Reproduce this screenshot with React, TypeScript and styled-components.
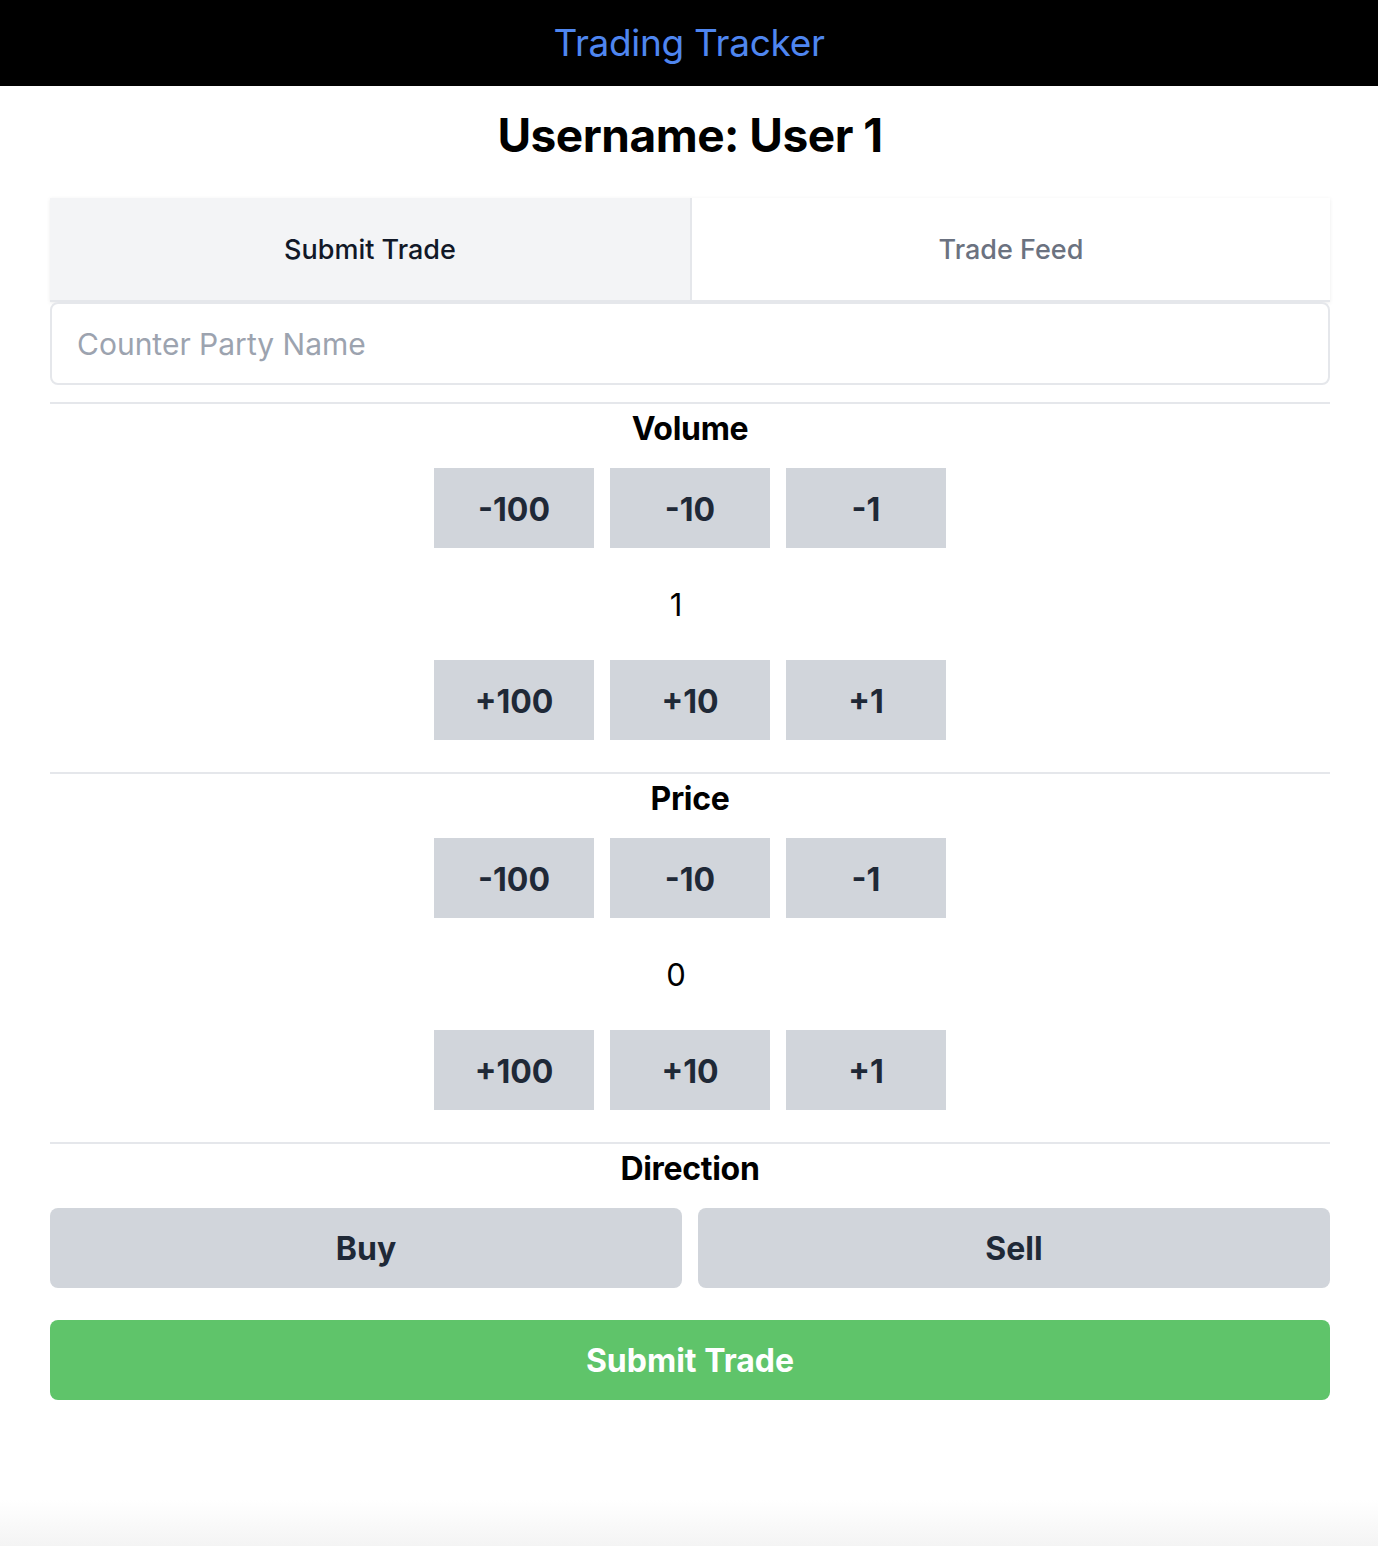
import React, { useState } from "react";
import styled, { createGlobalStyle } from "styled-components";

const Global = createGlobalStyle`
  html, body { margin: 0; padding: 0; background: #ffffff; }
  body { font-family: Inter, "Noto Sans", "Liberation Sans", sans-serif; color: #000; }
  * { box-sizing: border-box; }
`;

const Page = styled.div`
  min-height: 1546px;
  display: flex;
  flex-direction: column;
`;

const Header = styled.header`
  height: 86px;
  background: #000;
  display: flex;
  align-items: center;
  justify-content: center;
`;

const Title = styled.h1`
  margin: 0 0 2px;
  font-size: 37px;
  font-weight: 400;
  color: #4f86f0;
  letter-spacing: -0.3px;
`;

const Main = styled.main`
  padding: 0 48px 0 50px;
  display: flex;
  flex-direction: column;
`;

const Username = styled.h2`
  margin: 0;
  height: 112px;
  padding-bottom: 14px;
  display: flex;
  align-items: center;
  justify-content: center;
  font-size: 46px;
  font-weight: 700;
  letter-spacing: -0.5px;
`;

const Tabs = styled.div`
  display: grid;
  grid-template-columns: 1fr 1fr;
  box-shadow: 0 1px 4px rgba(0, 0, 0, 0.08);
  border-bottom: 2px solid #e5e7eb;
`;

const Tab = styled.button<{ $active?: boolean }>`
  height: 102px;
  border: none;
  background: ${(p) => (p.$active ? "#f3f4f6" : "#ffffff")};
  color: ${(p) => (p.$active ? "#111827" : "#6b7280")};
  font-family: inherit;
  font-size: 27px;
  font-weight: 500;
  cursor: pointer;
  & + & { border-left: 2px solid #e5e7eb; }
`;

const Input = styled.input`
  height: 83px;
  width: 100%;
  border: 2px solid #e5e7eb;
  border-radius: 8px;
  padding: 0 25px;
  font-family: inherit;
  font-size: 30px;
  color: #111827;
  outline: none;
  &::placeholder { color: #9ca3af; }
`;

const Divider = styled.hr`
  margin: 0;
  border: none;
  border-top: 2px solid #e5e7eb;
`;

const Section = styled.section<{ $gapTop: number }>`
  margin-top: ${(p) => p.$gapTop}px;
  display: flex;
  flex-direction: column;
`;

const Heading = styled.h3`
  margin: 0 0 14px;
  height: 50px;
  line-height: 50px;
  text-align: center;
  font-size: 32px;
  font-weight: 700;
  letter-spacing: -0.3px;
`;

const StepRow = styled.div`
  display: flex;
  justify-content: center;
  gap: 16px;
`;

const StepButton = styled.button`
  width: 160px;
  height: 80px;
  padding: 2px 0 0;
  border: none;
  background: #d1d5db;
  color: #1f2937;
  font-family: inherit;
  font-size: 32px;
  font-weight: 700;
  cursor: pointer;
`;

const Value = styled.div`
  height: 112px;
  line-height: 114px;
  text-align: center;
  padding-right: 28px;
  font-size: 31px;
  color: #000;
`;

const DirectionRow = styled.div`
  display: grid;
  grid-template-columns: 1fr 1fr;
  gap: 16px;
`;

const DirectionButton = styled.button<{ $selected?: boolean }>`
  height: 80px;
  border: none;
  border-radius: 8px;
  background: ${(p) => (p.$selected ? "#9ca3af" : "#d1d5db")};
  color: #1f2937;
  font-family: inherit;
  font-size: 32px;
  font-weight: 700;
  cursor: pointer;
`;

const SubmitButton = styled.button`
  margin-top: 32px;
  height: 80px;
  border: none;
  border-radius: 8px;
  background: #5fc46a;
  color: #fff;
  font-family: inherit;
  font-size: 32px;
  font-weight: 700;
  cursor: pointer;
`;

const Spacer = styled.div`
  flex: 1;
`;

const BottomFade = styled.div`
  height: 46px;
  background: linear-gradient(to bottom, #ffffff, #f4f4f4);
`;

const steps = [100, 10, 1];

function Stepper({ label, value, onChange, gapTop }: { label: string; value: number; onChange: (v: number) => void; gapTop: number }) {
  return (
    <Section $gapTop={gapTop}>
      <Divider />
      <Heading>{label}</Heading>
      <StepRow>
        {steps.map((s) => (
          <StepButton key={`m${s}`} onClick={() => onChange(value - s)}>-{s}</StepButton>
        ))}
      </StepRow>
      <Value>{value}</Value>
      <StepRow>
        {steps.map((s) => (
          <StepButton key={`p${s}`} onClick={() => onChange(value + s)}>+{s}</StepButton>
        ))}
      </StepRow>
    </Section>
  );
}

export default function App() {
  const [tab, setTab] = useState<"submit" | "feed">("submit");
  const [volume, setVolume] = useState(1);
  const [price, setPrice] = useState(0);
  const [dir, setDir] = useState<"buy" | "sell" | null>(null);
  return (
    <Page>
      <Global />
      <Header>
        <Title>Trading Tracker</Title>
      </Header>
      <Main>
        <Username>Username: User 1</Username>
        <Tabs>
          <Tab $active={tab === "submit"} onClick={() => setTab("submit")}>Submit Trade</Tab>
          <Tab $active={tab === "feed"} onClick={() => setTab("feed")}>Trade Feed</Tab>
        </Tabs>
        <Input placeholder="Counter Party Name" />
        <Stepper label="Volume" value={volume} onChange={setVolume} gapTop={17} />
        <Stepper label="Price" value={price} onChange={setPrice} gapTop={32} />
        <Section $gapTop={32}>
          <Divider />
          <Heading>Direction</Heading>
          <DirectionRow>
            <DirectionButton $selected={dir === "buy"} onClick={() => setDir("buy")}>Buy</DirectionButton>
            <DirectionButton $selected={dir === "sell"} onClick={() => setDir("sell")}>Sell</DirectionButton>
          </DirectionRow>
        </Section>
        <SubmitButton>Submit Trade</SubmitButton>
      </Main>
      <Spacer />
      <BottomFade />
    </Page>
  );
}
